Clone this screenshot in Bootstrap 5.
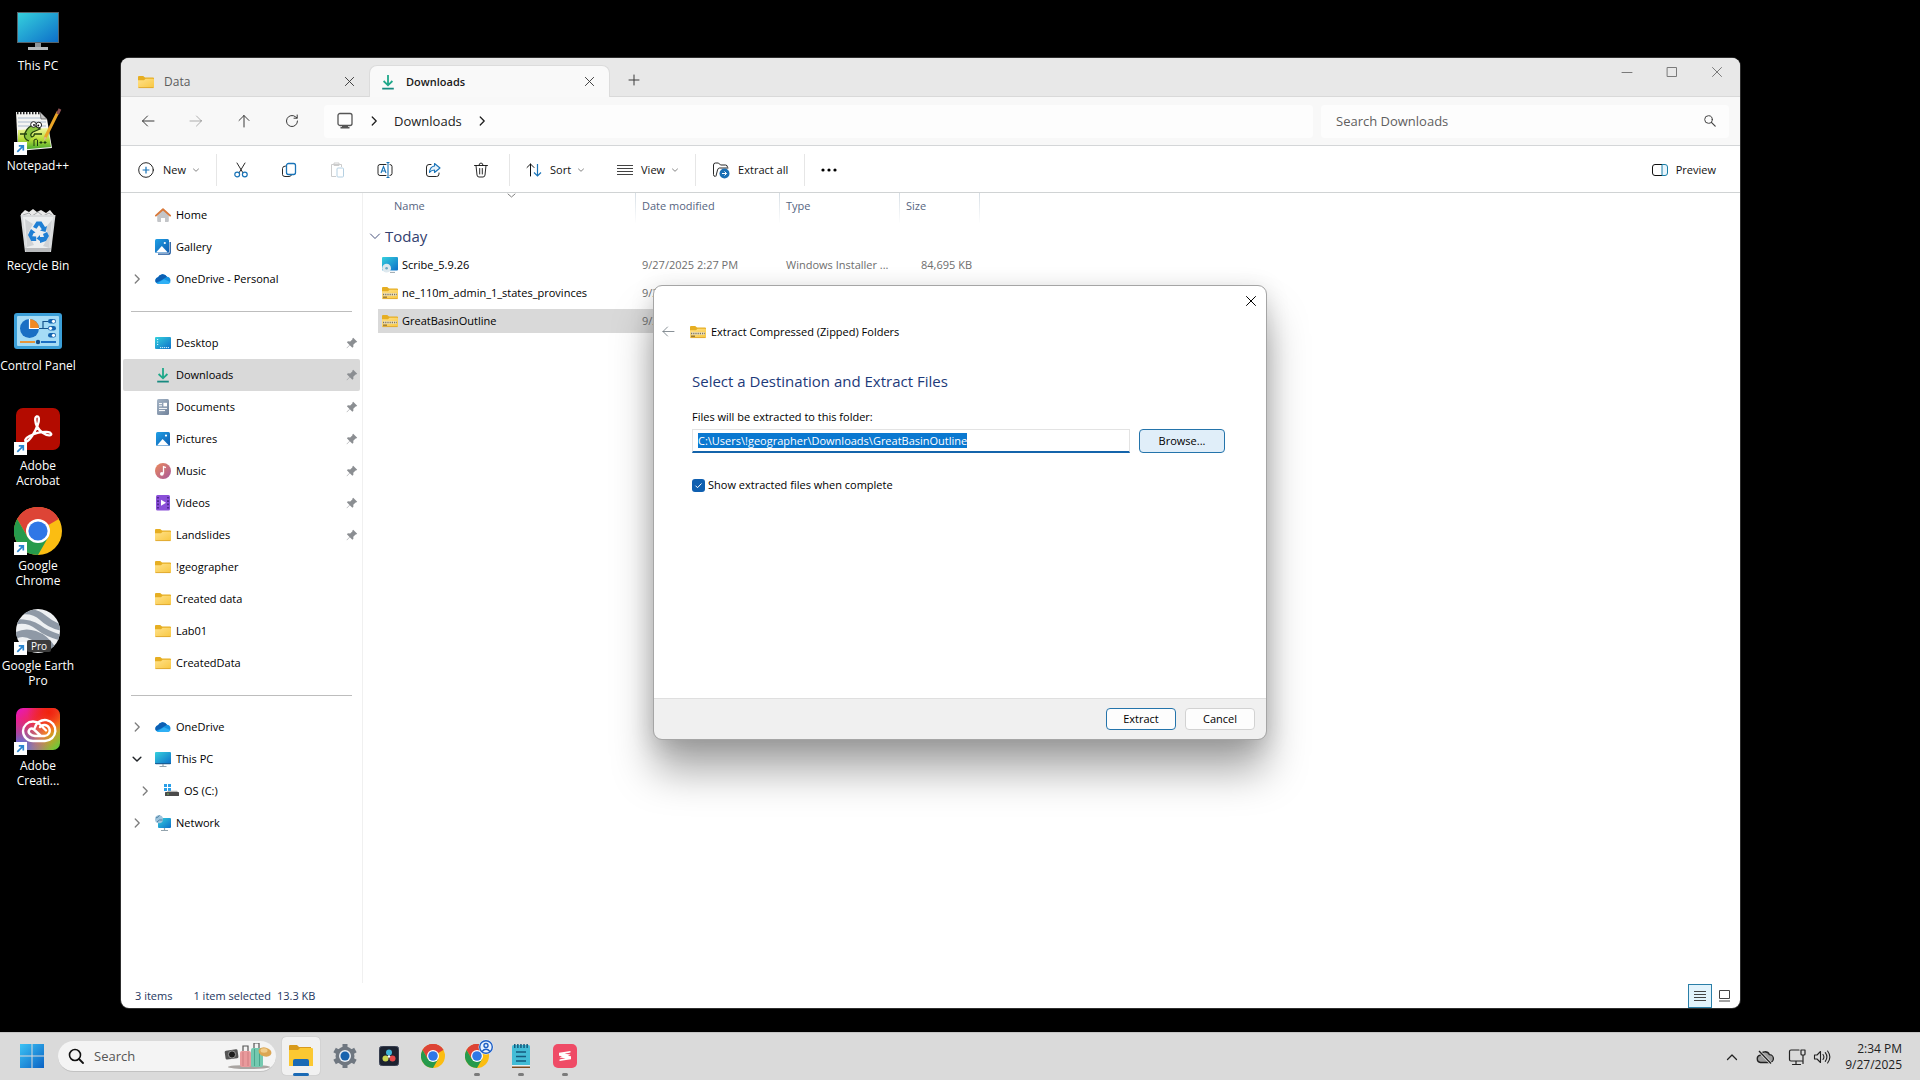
<!DOCTYPE html>
<html lang="en">
<head>
<meta charset="utf-8">
<meta name="viewport" content="width=device-width, initial-scale=1">
<title>Downloads</title>
<link href="https://cdn.jsdelivr.net/npm/bootstrap@5.3.0/dist/css/bootstrap.min.css" rel="stylesheet">
<style>
  :root { --ui: "Open Sans", "Noto Sans", sans-serif; }
  body { font-family: var(--ui); font-size: 11px; line-height: 16px; color: #111; background: #000; }
  a { color: inherit; text-decoration: none; }
  svg { display: block; flex: none; }
  button { font: inherit; color: inherit; background: none; border: 0; padding: 0; }
  .i16 { width: 16px; height: 16px; }
  .i18 { width: 18px; height: 18px; }
  .i48 { width: 48px; height: 48px; }
  .ln { fill: none; stroke: currentColor; stroke-linecap: round; stroke-linejoin: round; }

  /* desktop */
  .shortcut { width: 76px; height: 100px; padding-top: 7px; gap: 3px; color: #fff; font-size: 12px; line-height: 15px; }
  .shortcut span { width: 76px; white-space: nowrap; }

  /* explorer window */
  .explorer { left: 121px; right: 180px; top: 58px; bottom: 24px; border-radius: 8px; background: #fff; overflow: hidden; box-shadow: 0 0 0 1px #2e2e2e; }
  .tabstrip { height: 39px; background: #e8e8e8; border-bottom: 1px solid #d9d9d9; flex: none; }
  .tab-list { padding: 8px 0 0 7px; }
  .tab-item { width: 241px; height: 32px; margin-bottom: -1px; padding: 1px 14px 0 10px; gap: 10px; border-radius: 8px 8px 0 0; color: #5c5c5c; font-size: 12px; }
  .tab-item button { color: #333; }
  .tab-item.current { background: #f9f9f9; color: #1a1a1a; border: 1px solid #dcdcdc; border-bottom: 0; padding-top: 0; font-weight: 600; font-size: 11px; }
  .win-btns { padding: 1px 1px 0 0; }
  .win-btn { width: 45px; height: 26px; color: #7a7a7a; }
  .addressbar { height: 49px; background: #f8f8f8; border-bottom: 1px solid #d4d6d8; flex: none; padding: 0 11px 0 3px; font-size: 13px; }
  .nav-btn { width: 48px; height: 32px; color: #3a3a3a; }
  .crumbs, .searchbox { height: 33px; background: #fdfdfd; border-radius: 4px; }
  .crumbs { padding-left: 12px; margin: 0 8px; gap: 13px; color: #222; }
  .crumbs .host { color: #555; }
  .crumbs .sep { width: 14px; height: 14px; }
  .searchbox { width: 408px; padding: 0 11px 0 15px; color: #444; }
  .searchbox input { border: 0; outline: 0; background: none; flex: 1; min-width: 0; color: #5f5f5f; padding: 0; }
  .searchbox input::placeholder { color: #5f5f5f; opacity: 1; }
  .commands { height: 47px; padding-top: 2px; border-bottom: 1px solid #d0d3d4; background: #fff; flex: none; }
  .cmd { height: 32px; }
  .cmd-ico { width: 48px; height: 32px; }
  .cmd .more { width: 8px; height: 8px; margin-left: -2px; color: #777; }
  .rule { width: 1px; height: 32px; background: #e6e6e6; }

  .sidebar { width: 242px; padding: 6px 2px 0 2px; border-right: 1px solid #f0f0f0; flex: none; }
  .place { height: 32px; padding: 0 2px 0 7px; border-radius: 2px; color: #000; }
  .place.sel { background: #d9d9d9; }
  .place .tw { width: 14px; height: 14px; margin-right: 11px; color: #7d7d7d; }
  .place .nm { margin-left: 5px; flex: 1; }
  .place.deep { padding-left: 15px; }
  .split { height: 32px; padding: 0 8px 0 8px; }
  .split hr { margin: 0; flex: 1; border-top: 1px solid #bdbdbd; opacity: 1; }

  .files { table-layout: fixed; width: 602px; margin-left: 15px; border-collapse: separate; border-spacing: 0; }
  .files .c-name { width: 258px; }
  .files .c-date { width: 144px; }
  .files .c-type { width: 120px; }
  .files .c-size { width: 80px; }
  .files td, .files th { padding: 0 6px; white-space: nowrap; overflow: hidden; text-overflow: ellipsis; }
  .files thead th { height: 30px; padding-bottom: 4px; font-weight: 400; color: #56657f; border-right: 1px solid; border-image: linear-gradient(#d5dde4, #fff) 1; border-width: 0 1px 0 0; position: relative; }
  .files thead th:first-child { padding-left: 16px; }
  .sort-mark { left: 129px; top: 0; width: 9px; height: 5px; color: #808080; }
  .files .grp { height: 28px; padding: 0 0 3px; overflow: visible; font-weight: 400; font-size: 15px; color: #33406e; }
  .grp button { margin-left: -9px; gap: 4px; }
  .files tr.item td { height: 28px; border: solid transparent; border-width: 2px 0; background-clip: padding-box; color: #6e6e6e; }
  .files tr.item td:first-child { padding-left: 4px; color: #000; }
  .files tr.item td:last-child { padding-right: 8px; }
  .files tr.sel td { background-color: #d9d9d9; }
  .statusbar { height: 25px; color: #24365e; padding: 0 4px 0 14px; flex: none; }
  .statusbar .picked { margin-left: 21px; margin-right: 6px; }
  .view-btn { width: 24px; height: 24px; color: #444; }
  .view-btn.on { background: #e2f3fc; border: 1px solid #2a7fa8; }

  /* wizard */
  .wizard { left: 654px; top: 286px; width: 612px; height: 453px; background: #fff; border-radius: 8px; outline: 1px solid #a5a5a5; box-shadow: 0 32px 42px rgba(0,0,0,.34), 0 4px 24px rgba(0,0,0,.16); color: #000; overflow: hidden; }
  .wizard .caption-row { height: 30px; padding-right: 9px; }
  .wizard .title-row { height: 30px; padding: 2px 0 0 6px; }
  .wizard .title-row .zip-ico { margin: 0 5px 0 14px; }
  .wizard .pane { padding: 25px 41px 0 38px; }
  .wizard h1 { font-size: 15px; line-height: 20px; font-weight: 400; color: #1d3a7a; margin: 0 0 18px; }
  .path-row { gap: 9px; margin-bottom: 24px; }
  .path-box { height: 24px; flex: 1; border: 1px solid #e3e3e3; border-bottom: 2px solid #1464ab; padding: 0 5px; outline: 0; color: #111; min-width: 0; }
  .path-box::selection { background: #0a78d0; color: #fff; }
  .wbtn { height: 22px; width: 70px; border: 1px solid #d2d2d2; border-radius: 4px; background: #fdfdfd; }
  .wbtn.def { border-color: #2474ab; }
  .wbtn.hot { width: 86px; height: 24px; border-color: #2474ab; background: #e0eef9; }
  .tick { appearance: none; width: 13px; height: 13px; margin: 0; border-radius: 3px; background: #0f5fb0 url("data:image/svg+xml,%3Csvg xmlns='http://www.w3.org/2000/svg' viewBox='0 0 13 13'%3E%3Cpath d='M3.5 6.7l2 2 4-4.2' fill='none' stroke='%23fff'/%3E%3C/svg%3E"); }
  .tick-row { gap: 3px; }
  .wizard footer { height: 41px; background: #f0f0f0; border-top: 1px solid #dfdfdf; padding: 0 11px; gap: 9px; }

  /* taskbar */
  .taskbar { height: 48px; background: #dadada; border-top: 1px solid #c4c4c4; flex: none; padding-left: 10px; padding-right: 18px; }
  .tb { width: 44px; height: 47px; padding-bottom: 1px; }
  .tb.on .tile { background: #f1f1f1; box-shadow: 0 0 1px #999; }
  .tile { width: 38px; height: 38px; border-radius: 4px; }
  .run { bottom: 4px; width: 6px; height: 3px; border-radius: 2px; background: #7b7b7b; }
  .tb.on .run { width: 16px; background: #1a6ab5; }
  .seek { width: 218px; height: 31px; margin: 0 3px 0 4px; border-radius: 16px; background: #f4f4f4; border-bottom: 1px solid #c2c2c2; padding: 0 4px 0 10px; font-size: 13px; }
  .seek input { border: 0; outline: 0; background: none; flex: 1; min-width: 0; padding: 0 0 0 10px; }
  .seek input::placeholder { color: #555; opacity: 1; }
  .tray { color: #222; font-size: 12px; gap: 14px; }
  .tray .pair { gap: 7px; }
</style>
<script src="https://cdn.jsdelivr.net/npm/bootstrap@5.3.0/dist/js/bootstrap.bundle.min.js"></script>
</head>
<body class="vh-100 overflow-hidden d-flex flex-column">

<svg width="0" height="0" class="position-absolute" aria-hidden="true">
  <defs>
    <linearGradient id="gPc" x1="0" y1="0" x2="1" y2="1"><stop offset="0" stop-color="#35d0dd"/><stop offset="1" stop-color="#0d6fc9"/></linearGradient>
    <linearGradient id="gFo" x1="0" y1="0" x2="1" y2="1"><stop offset="0" stop-color="#ffe18a"/><stop offset="1" stop-color="#f8c741"/></linearGradient>
    <linearGradient id="gBl" x1="0" y1="0" x2="1" y2="1"><stop offset="0" stop-color="#1fa0e6"/><stop offset="1" stop-color="#0f5cb0"/></linearGradient>
    <linearGradient id="gMu" x1="0" y1="0" x2="1" y2="1"><stop offset="0" stop-color="#ec8a5b"/><stop offset="1" stop-color="#a8589c"/></linearGradient>
    <linearGradient id="gDo" x1="0" y1="0" x2="1" y2="1"><stop offset="0" stop-color="#a4b4c6"/><stop offset="1" stop-color="#71839b"/></linearGradient>
    <linearGradient id="gNp" x1="0" y1="0" x2="0" y2="1"><stop offset="0" stop-color="#f3f8a0"/><stop offset=".5" stop-color="#b9dd3a"/><stop offset="1" stop-color="#3fa52c"/></linearGradient>
    <linearGradient id="gCc1" x1="0" y1="0" x2="1" y2="1"><stop offset="0" stop-color="#e516c8"/><stop offset=".35" stop-color="#f02a4c"/><stop offset=".65" stop-color="#f58a1e"/><stop offset="1" stop-color="#52d540"/></linearGradient>
    <radialGradient id="gCc2" cx=".1" cy=".95" r=".7"><stop offset="0" stop-color="#3a7bf5"/><stop offset="1" stop-color="#8a50e8" stop-opacity="0"/></radialGradient>
    <radialGradient id="gCc3" cx=".75" cy=".1" r=".5"><stop offset="0" stop-color="#f0220c"/><stop offset="1" stop-color="#f0220c" stop-opacity="0"/></radialGradient>
    <linearGradient id="gStart" x1="0" y1="0" x2="1" y2="1"><stop offset="0" stop-color="#3cc3f5"/><stop offset="1" stop-color="#0a62c4"/></linearGradient>
    <clipPath id="cEarth"><circle cx="24" cy="24" r="22"/></clipPath>

    <symbol id="folder" viewBox="0 0 16 16"><path d="M0 3a1 1 0 0 1 1-1h4.2l1.8 1.6H15a1 1 0 0 1 1 1V7H0z" fill="#e6ae22"/><path d="M0 6.2h6L7.6 4.8H15a1 1 0 0 1 1 1V13a1 1 0 0 1-1 1H1a1 1 0 0 1-1-1z" fill="url(#gFo)"/><path d="M.5 13.6h15" stroke="#d9a02a" stroke-width=".8"/></symbol>
    <symbol id="zip" viewBox="0 0 16 16"><use href="#folder"/><path d="M1 9.500h14" stroke="#efe3c0" stroke-width="2.600"/><path d="M1 9.500h14" stroke="#7a7260" stroke-width="1.400" stroke-dasharray="1.200 1"/><path d="M1 12.200h4" stroke="#9a7a3a" stroke-width="1.400"/></symbol>
    <symbol id="dl" viewBox="0 0 16 16"><path d="M8 1v10M3.600 7L8 11.300 12.400 7" fill="none" stroke="#1fa88a" stroke-width="1.800"/><path d="M2.200 14.600h11.600" stroke="#178a80" stroke-width="1.800"/></symbol>
    <symbol id="home" viewBox="0 0 16 16"><path d="M2.200 7.500L8 2.600l5.800 4.900V14a1 1 0 0 1-1 1H10v-4H6v4H3.200a1 1 0 0 1-1-1z" fill="#c3c5c8"/><path d="M.9 8.600L8 2.200l7.100 6.400" fill="none" stroke="#d9793a" stroke-width="1.900" stroke-linecap="round" stroke-linejoin="round"/></symbol>
    <symbol id="gallery" viewBox="0 0 16 16"><path d="M15.200 3v10.200a2 2 0 0 1-2 2H3" fill="none" stroke="#17539a" stroke-width="1.300"/><rect x="0" y="0" width="14" height="14" rx="1.500" fill="url(#gBl)"/><path d="M1 13.600L6.800 7l6 6.600z" fill="#fff"/><circle cx="9.800" cy="4" r="1.100" fill="#fff"/></symbol>
    <symbol id="cloud" viewBox="0 0 16 16"><path d="M3.400 13A3.400 3.400 0 0 1 3 6.300 5 5 0 0 1 12 5.700 3.700 3.700 0 0 1 12.600 13z" fill="#1490df"/><path d="M3 6.300A5 5 0 0 1 12 5.700L5.500 9.800 1 11.600A3.400 3.400 0 0 1 3 6.300z" fill="#0d5fb3"/><path d="M2 12.600l7-4.300 6.600 3A3.400 3.400 0 0 1 12.600 13H3.400z" fill="#2fb0f5"/></symbol>
    <symbol id="desk" viewBox="0 0 16 16"><rect y="2" width="16" height="12" rx="1" fill="url(#gPc)"/><path d="M2 4.500h1.200M2 7h1.200M2 9.500h1.200M5 12.600h9" stroke="#d9f6ff" stroke-width="1" stroke-dasharray="1.200 .8"/></symbol>
    <symbol id="docs" viewBox="0 0 16 16"><rect x="2" y="0" width="12" height="16" rx="1.500" fill="url(#gDo)"/><path d="M4 4.600h3M4 6.800h3M4 9.400h8M4 11.600h6" stroke="#fff"/><path d="M8.400 3.800H12v3.600H8.400z" fill="#fff"/></symbol>
    <symbol id="pics" viewBox="0 0 16 16"><rect x="1" y="1" width="14" height="14" rx="1.500" fill="url(#gBl)"/><path d="M2 14.600L7.600 8l6.400 6.600z" fill="#fff"/><circle cx="11" cy="4.600" r="1.100" fill="#fff"/></symbol>
    <symbol id="music" viewBox="0 0 16 16"><circle cx="8" cy="8" r="8" fill="url(#gMu)"/><path d="M8.500 10.400V3.600l2.400 1" fill="none" stroke="#fff" stroke-width="1.300"/><circle cx="6.900" cy="10.800" r="1.900" fill="#fff"/></symbol>
    <symbol id="video" viewBox="0 0 16 16"><rect x="1" y="0" width="14" height="15.600" rx="1.500" fill="#8a4fd8"/><path d="M3 2v12M13 2v12" stroke="#42207e" stroke-width="1.600" stroke-dasharray="1.600 1.700"/><path d="M6 4.800l5 3-5 3z" fill="#fff"/></symbol>
    <symbol id="pc" viewBox="0 0 16 16"><rect x="0" y="1" width="16" height="12" rx="1" fill="url(#gPc)"/><path d="M0 12h16v.5a1 1 0 0 1-1 .8H1a1 1 0 0 1-1-.8z" fill="#1a5f96"/><path d="M8 13v2M4.500 15.500h7" stroke="#93a3ad" stroke-width="1.200"/></symbol>
    <symbol id="os" viewBox="0 0 16 16"><path d="M1 1h3v3H1zM5 1h3v3H5zM1 5h3v3H1zM5 5h3v3H5z" fill="#2a9fe8"/><rect x="2" y="9" width="14" height="4" rx=".6" fill="#4a4a4a"/><path d="M4 9l1-1.200h9L15 9z" fill="#b5b5b5"/><circle cx="5" cy="11" r=".7" fill="#7fdc5a"/></symbol>
    <symbol id="net" viewBox="0 0 16 16"><rect x="3" y="3" width="13" height="10" rx="1" fill="url(#gPc)"/><path d="M9.500 13v2M6 15.500h7" stroke="#93a3ad" stroke-width="1.200"/><circle cx="4" cy="4.200" r="4" fill="#9ec4dd"/><path d="M1 3q3-1 3.400-2.800M2 7q2-3 5.600-2" fill="none" stroke="#4d7f9f"/></symbol>
    <symbol id="msi" viewBox="0 0 16 16"><rect x="0" y="0" width="16" height="13.500" rx="1" fill="url(#gPc)"/><path d="M8 15.400h5" stroke="#9aa7b0"/><circle cx="4.600" cy="11.200" r="4.400" fill="#dde8ee"/><circle cx="4.600" cy="11.200" r="1.300" fill="#6aa9c4"/></symbol>
    <symbol id="pin" viewBox="0 0 12 12"><path d="M7.200.8l4 4-1.100.7-.5-.1-2.300 2.300.1 2.100-1 1L3.800 8.200.9 11.200l-.3-.3L3.500 7.900.9 5.300l1-1 2.300.2 2.300-2.300-.1-.6z" fill="#8b8e92"/></symbol>
    <symbol id="right" viewBox="0 0 16 16"><path class="ln" d="M6 3.500l4.500 4.500L6 12.500" stroke-width="1.500"/></symbol>
    <symbol id="down" viewBox="0 0 16 16"><path class="ln" d="M3.600 6L8 10.200 12.400 6" stroke-width="1.700"/></symbol>
    <symbol id="dn" viewBox="0 0 8 8"><path class="ln" d="M1.500 3L4 5.300 6.500 3" stroke-width=".9"/></symbol>
    <symbol id="x" viewBox="0 0 12 12"><path class="ln" d="M1.500 1.500l9 9M10.500 1.500l-9 9" stroke-width="1"/></symbol>
    <symbol id="lens" viewBox="0 0 16 16"><circle class="ln" cx="6.500" cy="6.500" r="3.800" stroke-width="1"/><path class="ln" d="M9.400 9.400L13.200 13.200" stroke-width="1.200"/></symbol>
    <symbol id="link" viewBox="0 0 13 13"><rect width="13" height="13" fill="#fff"/><path d="M3.300 9.800L8.500 4.600M4.800 3.900h4.500v4.500" fill="none" stroke="#2b86d0" stroke-width="1.700"/></symbol>
    <symbol id="chrome" viewBox="0 0 48 48"><circle cx="24" cy="24" r="24" fill="#fbbd12"/><path d="M24 24L3.200 12A24 24 0 0 1 44.800 12z" fill="#dd4436"/><path d="M24 12h20.800A24 24 0 0 0 3.200 12L13.600 30z" fill="#dd4436"/><path d="M3.200 12A24 24 0 0 0 24 48L34.400 30 24 24 13.600 30z" fill="#269a4c"/><circle cx="24" cy="24" r="12" fill="#fff"/><circle cx="24" cy="24" r="9.600" fill="#2f77e6"/></symbol>
  </defs>
</svg>

<main class="flex-grow-1 position-relative">
  <nav class="d-flex flex-column align-items-start" aria-label="Desktop">
    <a href="#" class="shortcut d-flex flex-column align-items-center text-center">
      <svg class="i48" viewBox="0 0 48 48"><rect x="3" y="5" width="42" height="31" fill="#56646c"/><rect x="4" y="6" width="40" height="29" fill="url(#gPc)"/><path d="M21 36h6v4h-6z" fill="#8c9499"/><path d="M14 40h20v3H14z" fill="#b4babd"/></svg>
      <span>This PC</span></a>
    <a href="#" class="shortcut d-flex flex-column align-items-center text-center">
      <svg class="i48" viewBox="0 0 48 48"><path d="M2 5h24l7 7 5 29-34 3z" fill="#f5f5f2"/><path d="M4 11h24M4 15h28M4 19h28" stroke="#a9b9cc"/><path d="M3 6h24" stroke="#222" stroke-width="2.400" stroke-dasharray="1.500 1.500"/><path d="M26 5l7 7h-6z" fill="#c4c4c4" stroke="#444" stroke-width=".6"/><path d="M4 23l30-2 3 19-33 3z" fill="url(#gNp)"/><path d="M15 34q-6-2-4-8 3-7 9-8l6 4-7 3q-4 3-1 5 3-1 2-3" fill="#8cc63f" stroke="#23420e" stroke-width="1.300"/><path d="M6 27h7M20 27h8" stroke="#23420e" stroke-width="1.300"/><circle cx="19.500" cy="17.500" r="2.800" fill="#fff" stroke="#222"/><circle cx="24.800" cy="18" r="2.800" fill="#fff" stroke="#222"/><circle cx="20" cy="18" r=".9"/><circle cx="24.300" cy="18.500" r=".9"/><path d="M20 39v-6q2.500-2 3.500 0v6M25.500 35.500h3M27 34v3M29.500 35.500h3M31 34v3" fill="none" stroke="#1c3a10" stroke-width="1"/><path d="M31 31L44 5" stroke="#eaa526" stroke-width="3"/><path d="M43.500 7L46 2" stroke="#8c5050" stroke-width="3"/><path d="M29.500 34l1-4.500 2.600 1.400z" fill="#d8b98a"/><use href="#link" x="0" y="35" width="13" height="13"/></svg>
      <span>Notepad++</span></a>
    <a href="#" class="shortcut d-flex flex-column align-items-center text-center">
      <svg class="i48" viewBox="0 0 48 48"><path d="M7 7l4-4 4 2 4-3 4 3 4-2 5 3 4-3 4 5v3H7z" fill="#e9e9e9"/><path d="M9 8l6-2 3 3 6-4 5 4 6-3 4 3" stroke="#a5a8aa" fill="none"/><path d="M6.500 8h35l-4.500 37H11z" fill="#d9dbdd"/><path d="M9 10h30l-4 31H13z" fill="#eceeef"/><path d="M11 12l8 5-5 9 6 12-7 2zM38 13l-7 8 4 8-6 10 6 2z" fill="#cfd2d5"/><path d="M11 41h26l-1 4H12z" fill="#b9bbbd"/><path d="M19 20l3.500-5.500h5L31 20l2-1-1.500 6-5.500-1.500 1.800-1.200-2.800-4-2.500 3.500zM17 22l4.500 3.500-2 .8-1.300 3 4 .2v4.500h-5L14 28l1.600-3.500zM26 36v-2l-3.500-2.500L26 28v2h4l-1-3 4-2 2 4-3 5z" fill="#1f7fd4"/></svg>
      <span>Recycle Bin</span></a>
    <a href="#" class="shortcut d-flex flex-column align-items-center text-center">
      <svg class="i48" viewBox="0 0 48 48"><rect y="6" width="48" height="36" rx="3" fill="#3b9fd8"/><rect x="3" y="9" width="42" height="30" rx="1" fill="#a5dcf6"/><circle cx="15.500" cy="21.500" r="9.500" fill="#1b6fc4"/><path d="M15.500 21.500V12a9.500 9.500 0 0 1 9.500 9.500z" fill="#f08a24"/><path d="M15.500 12v9.500H25" fill="none" stroke="#fff" stroke-width="1.200"/><path d="M25 21.500h4v-7h5M29 21.500h5" stroke="#17558e" fill="none" stroke-width="1.200"/><rect x="34" y="12" width="8" height="4.600" rx="2.300" fill="#1464b0"/><rect x="34" y="19" width="8" height="4.600" rx="2.300" fill="#1464b0"/><rect x="34" y="26" width="8" height="4.600" rx="2.300" fill="#1464b0"/><circle cx="39.500" cy="14.300" r="1.600" fill="#fff"/><circle cx="36.500" cy="21.300" r="1.600" fill="#fff"/><circle cx="39.500" cy="28.300" r="1.600" fill="#fff"/><path d="M6 35h15" stroke="#e6953a" stroke-width="2"/><path d="M27 35h15" stroke="#1b6fc4" stroke-width="2"/><circle cx="24" cy="35" r="2.200" fill="#14508c"/></svg>
      <span>Control Panel</span></a>
    <a href="#" class="shortcut d-flex flex-column align-items-center text-center">
      <svg class="i48" viewBox="0 0 48 48"><rect x="2" y="1" width="44" height="42" rx="7" fill="#b30b00"/><path d="M22.500 9.500c3-1 3 4 1 9-3 8-8 15-11 16-2 0-2-3 3-5.500 6-3 13-4.500 18-4 4 .3 5 3 2 3.400-4 .3-10-4-12.500-9-2-4-2.500-9-.5-9.900z" fill="none" stroke="#fff" stroke-width="2.400"/><use href="#link" x="0" y="35" width="13" height="13"/></svg>
      <span>Adobe<br>Acrobat</span></a>
    <a href="#" class="shortcut d-flex flex-column align-items-center text-center">
      <svg class="i48" viewBox="0 0 48 48"><use href="#chrome"/><use href="#link" x="0" y="35" width="13" height="13"/></svg>
      <span>Google<br>Chrome</span></a>
    <a href="#" class="shortcut d-flex flex-column align-items-center text-center">
      <svg class="i48" viewBox="0 0 48 48"><g clip-path="url(#cEarth)"><rect width="48" height="48" fill="#eef0f2"/><path d="M4 8q14-3 22 5t22 11v-6Q38 14 31 8T10 1zM0 18q12-4 22 4t26 12v-6q-14-4-22-10T2 12zM0 33q8-6 18 0t18 12l6-4Q34 28 22 24T0 26z" fill="#8f99a6"/></g><rect x="13" y="33" width="24" height="12" rx="2" fill="#3c3c3c"/><text x="25" y="43" text-anchor="middle" fill="#fff" font-size="10">Pro</text><use href="#link" x="0" y="35" width="13" height="13"/></svg>
      <span>Google Earth<br>Pro</span></a>
    <a href="#" class="shortcut d-flex flex-column align-items-center text-center">
      <svg class="i48" viewBox="0 0 48 48"><rect x="2" y="1" width="44" height="42" rx="7" fill="url(#gCc1)"/><rect x="2" y="1" width="44" height="42" rx="7" fill="url(#gCc3)"/><rect x="2" y="1" width="44" height="42" rx="7" fill="url(#gCc2)"/><path d="M19 34a10 10 0 0 1-10-10 10 10 0 0 1 10-9.500q4 0 6.500 2.500l6.500 6.500M19 34h12a10.500 10.500 0 1 0-10.300-13M27 29l-7-6.500q-3-2-4.500 0-2 2.500.5 4.500 2 1.800 5 2h9a5.500 5.500 0 1 0-4-9" fill="none" stroke="#fff" stroke-width="2.400" stroke-linecap="round"/><use href="#link" x="0" y="35" width="13" height="13"/></svg>
      <span>Adobe<br>Creati...</span></a>
  </nav>

  <section class="explorer position-absolute d-flex flex-column">
    <div class="tabstrip d-flex">
      <div class="tab-list d-flex align-items-end">
        <div class="tab-item d-flex align-items-center"><svg class="i16"><use href="#folder"/></svg><span class="flex-grow-1">Data</span><button aria-label="Close Data"><svg width="11" height="11"><use href="#x"/></svg></button></div>
        <div class="tab-item current d-flex align-items-center"><svg class="i16"><use href="#dl"/></svg><span class="flex-grow-1">Downloads</span><button aria-label="Close Downloads"><svg width="11" height="11"><use href="#x"/></svg></button></div>
        <button class="nav-btn d-flex align-items-center justify-content-center" aria-label="New tab"><svg width="12" height="12" viewBox="0 0 12 12"><path class="ln" d="M6 1v10M1 6h10"/></svg></button>
      </div>
      <div class="win-btns ms-auto d-flex">
        <button class="win-btn d-flex align-items-center justify-content-center" aria-label="Minimize"><svg width="12" height="12" viewBox="0 0 12 12"><path class="ln" d="M1 6.500h10"/></svg></button>
        <button class="win-btn d-flex align-items-center justify-content-center" aria-label="Maximize"><svg width="12" height="12" viewBox="0 0 12 12"><path class="ln" d="M1.500 1.500h9v9h-9z"/></svg></button>
        <button class="win-btn d-flex align-items-center justify-content-center" aria-label="Close"><svg width="12" height="12"><use href="#x"/></svg></button>
      </div>
    </div>

    <div class="addressbar d-flex align-items-center">
      <div class="d-flex">
        <button class="nav-btn d-flex align-items-center justify-content-center" aria-label="Back"><svg class="i16" viewBox="0 0 16 16"><path class="ln" d="M14 8H2.500M7.500 3l-5 5 5 5"/></svg></button>
        <button class="nav-btn d-flex align-items-center justify-content-center text-black-50" aria-label="Forward"><svg class="i16" viewBox="0 0 16 16"><path class="ln" d="M2 8h11.500M8.500 3l5 5-5 5" opacity=".6"/></svg></button>
        <button class="nav-btn d-flex align-items-center justify-content-center" aria-label="Up"><svg class="i16" viewBox="0 0 16 16"><path class="ln" d="M8 14V2.500M3 7.500l5-5 5 5"/></svg></button>
        <button class="nav-btn d-flex align-items-center justify-content-center" aria-label="Refresh"><svg class="i16" viewBox="0 0 16 16"><path class="ln" d="M13.500 8A5.500 5.500 0 1 1 11.500 3.800L13 5M13.200 2v3.200H10"/></svg></button>
      </div>
      <div class="crumbs d-flex align-items-center flex-grow-1">
        <svg class="i18 host" viewBox="0 0 18 18"><rect class="ln" x="2" y="1.500" width="14" height="12" rx="2" stroke-width="1.300"/><path d="M6 14h6v1h1.500v1.500h-9V15H6z" fill="#555"/></svg>
        <svg class="sep"><use href="#right"/></svg>
        <a href="#">Downloads</a>
        <svg class="sep"><use href="#right"/></svg>
      </div>
      <label class="searchbox d-flex align-items-center"><input type="text" placeholder="Search Downloads" aria-label="Search Downloads"><svg class="i16"><use href="#lens"/></svg></label>
    </div>

    <div class="commands d-flex align-items-center">
      <button class="cmd d-flex align-items-center px-3 gap-2"><svg class="i18" viewBox="0 0 16 16"><circle class="ln" cx="8" cy="8" r="6.500" stroke-width=".8"/><path d="M8 5v6M5 8h6" stroke="#1a74b8" stroke-width="1.100"/></svg>New<svg class="more"><use href="#dn"/></svg></button>
      <div class="rule"></div>
      <div class="d-flex">
        <button class="cmd-ico d-flex align-items-center justify-content-center" aria-label="Cut"><svg class="i16" viewBox="0 0 16 16"><path class="ln" d="M4 1l5.800 9.600M12 1L6.200 10.600" stroke-width=".9"/><g fill="none" stroke="#1a74b8" stroke-width="1.200"><circle cx="4.200" cy="12.500" r="2.400"/><circle cx="11.800" cy="12.500" r="2.400"/></g></svg></button>
        <button class="cmd-ico d-flex align-items-center justify-content-center" aria-label="Copy"><svg class="i16" viewBox="0 0 16 16"><path class="ln" d="M4.500 4Q1.500 4 1.500 6.500v6q0 2 2.500 2h4q2 0 2.500-1.500" stroke-width=".9"/><rect x="5.500" y="1.500" width="9" height="11" rx="2" fill="#fff" stroke="#1a74b8" stroke-width="1.300"/></svg></button>
        <button class="cmd-ico d-flex align-items-center justify-content-center" aria-label="Paste" disabled><svg class="i16" viewBox="0 0 16 16"><path d="M7 14.500H2.500v-12h10V5M5 1h5v2.500H5z" fill="none" stroke="#ccc"/><rect x="8" y="6" width="6.500" height="9" rx="1" fill="#fff" stroke="#b5d0e2"/></svg></button>
        <button class="cmd-ico d-flex align-items-center justify-content-center" aria-label="Rename"><svg class="i18" viewBox="0 0 18 18"><path class="ln" d="M10 3.500H4Q2 3.500 2 5.500v7q0 2 2 2h6M14 3.500q2 0 2 2v7q0 2-2 2" stroke-width=".9"/><path d="M5 12l2.500-6.500L10 12M6 10h3M12 1.500v15M10.500 1.500h3M10.500 16.500h3" fill="none" stroke="#1a74b8" stroke-width="1.100"/></svg></button>
        <button class="cmd-ico d-flex align-items-center justify-content-center" aria-label="Share"><svg class="i16" viewBox="0 0 16 16"><path class="ln" d="M6 2.500H4q-2.500 0-2.500 2.500v7q0 2.500 2.500 2.500h7.500q2.500 0 2.500-2.500v-1" stroke-width=".9"/><path d="M9.500 1.500l5.500 4.500-5.500 4.500V8Q6.500 8 4.500 10.500 5 4.500 9.500 4z" fill="#e6f2fb" stroke="#1a74b8" stroke-width="1.100" stroke-linejoin="round"/></svg></button>
        <button class="cmd-ico d-flex align-items-center justify-content-center" aria-label="Delete"><svg class="i16" viewBox="0 0 16 16"><path class="ln" d="M1.500 3.500h13M6 3.500q0-2.500 2-2.500t2 2.500M3 3.500l1 9.500q.2 2 2 2h4q1.800 0 2-2l1-9.500M6.700 6.500V12M9.300 6.500V12" stroke-width=".9"/></svg></button>
      </div>
      <div class="rule ms-1"></div>
      <button class="cmd d-flex align-items-center ps-3 pe-3 gap-2"><svg class="i16" viewBox="0 0 16 16"><path class="ln" d="M4.500 14V2M1 5.500L4.500 2 8 5.500"/><path d="M11.500 2v12M8 10.500l3.500 3.500 3.500-3.500" fill="none" stroke="#1a74b8" stroke-width="1.200"/></svg>Sort<svg class="more"><use href="#dn"/></svg></button>
      <button class="cmd d-flex align-items-center ps-3 pe-3 gap-2"><svg class="i16" viewBox="0 0 16 16"><path d="M0 3.500h16M0 6.500h16M0 9.500h16M0 12.500h16" stroke="#444"/></svg>View<svg class="more"><use href="#dn"/></svg></button>
      <div class="rule"></div>
      <button class="cmd d-flex align-items-center px-3 gap-2"><svg class="i18" viewBox="0 0 18 18"><path class="ln" d="M3 15.500q-1.500 0-1.500-2V4q0-2 2-2h3l2 2h5q2 0 2 2M4 15l1.500-6q.5-2 2-2H16" stroke-width=".9"/><circle cx="12.500" cy="12.500" r="5" fill="#1a6fb5"/><path d="M10 12.500h4.500M12.500 10.500l2 2-2 2" fill="none" stroke="#fff"/></svg>Extract all</button>
      <div class="rule"></div>
      <button class="cmd-ico d-flex align-items-center justify-content-center" aria-label="More"><svg width="16" height="4" viewBox="0 0 16 4"><circle cx="2" cy="2" r="1.600"/><circle cx="8" cy="2" r="1.600"/><circle cx="14" cy="2" r="1.600"/></svg></button>
      <button class="cmd d-flex align-items-center gap-2 ms-auto me-4"><svg class="i16" viewBox="0 0 16 16"><path class="ln" d="M10 2.500H3Q.5 2.500.5 5v6q0 2.500 2.500 2.500h7"/><path d="M10 2.500h3q2.500 0 2.500 2.500v6q0 2.500-2.500 2.500h-3z" fill="#e8f5fc" stroke="#1a7fa8"/></svg>Preview</button>
    </div>

    <div class="d-flex flex-grow-1 overflow-hidden">
      <nav class="sidebar" aria-label="Places">
        <a href="#" class="place d-flex align-items-center"><span class="tw"></span><svg class="i16"><use href="#home"/></svg><span class="nm">Home</span></a>
        <a href="#" class="place d-flex align-items-center"><span class="tw"></span><svg class="i16"><use href="#gallery"/></svg><span class="nm">Gallery</span></a>
        <a href="#" class="place d-flex align-items-center"><svg class="tw"><use href="#right"/></svg><svg class="i16"><use href="#cloud"/></svg><span class="nm">OneDrive - Personal</span></a>
        <div class="split d-flex align-items-center"><hr></div>
        <a href="#" class="place d-flex align-items-center"><span class="tw"></span><svg class="i16"><use href="#desk"/></svg><span class="nm">Desktop</span><svg width="12" height="12"><use href="#pin"/></svg></a>
        <a href="#" class="place sel d-flex align-items-center"><span class="tw"></span><svg class="i16"><use href="#dl"/></svg><span class="nm">Downloads</span><svg width="12" height="12"><use href="#pin"/></svg></a>
        <a href="#" class="place d-flex align-items-center"><span class="tw"></span><svg class="i16"><use href="#docs"/></svg><span class="nm">Documents</span><svg width="12" height="12"><use href="#pin"/></svg></a>
        <a href="#" class="place d-flex align-items-center"><span class="tw"></span><svg class="i16"><use href="#pics"/></svg><span class="nm">Pictures</span><svg width="12" height="12"><use href="#pin"/></svg></a>
        <a href="#" class="place d-flex align-items-center"><span class="tw"></span><svg class="i16"><use href="#music"/></svg><span class="nm">Music</span><svg width="12" height="12"><use href="#pin"/></svg></a>
        <a href="#" class="place d-flex align-items-center"><span class="tw"></span><svg class="i16"><use href="#video"/></svg><span class="nm">Videos</span><svg width="12" height="12"><use href="#pin"/></svg></a>
        <a href="#" class="place d-flex align-items-center"><span class="tw"></span><svg class="i16"><use href="#folder"/></svg><span class="nm">Landslides</span><svg width="12" height="12"><use href="#pin"/></svg></a>
        <a href="#" class="place d-flex align-items-center"><span class="tw"></span><svg class="i16"><use href="#folder"/></svg><span class="nm">!geographer</span></a>
        <a href="#" class="place d-flex align-items-center"><span class="tw"></span><svg class="i16"><use href="#folder"/></svg><span class="nm">Created data</span></a>
        <a href="#" class="place d-flex align-items-center"><span class="tw"></span><svg class="i16"><use href="#folder"/></svg><span class="nm">Lab01</span></a>
        <a href="#" class="place d-flex align-items-center"><span class="tw"></span><svg class="i16"><use href="#folder"/></svg><span class="nm">CreatedData</span></a>
        <div class="split d-flex align-items-center"><hr></div>
        <a href="#" class="place d-flex align-items-center"><svg class="tw"><use href="#right"/></svg><svg class="i16"><use href="#cloud"/></svg><span class="nm">OneDrive</span></a>
        <a href="#" class="place d-flex align-items-center"><svg class="tw text-dark"><use href="#down"/></svg><svg class="i16"><use href="#pc"/></svg><span class="nm">This PC</span></a>
        <a href="#" class="place deep d-flex align-items-center"><svg class="tw"><use href="#right"/></svg><svg class="i16"><use href="#os"/></svg><span class="nm">OS (C:)</span></a>
        <a href="#" class="place d-flex align-items-center"><svg class="tw"><use href="#right"/></svg><svg class="i16"><use href="#net"/></svg><span class="nm">Network</span></a>
      </nav>

      <div class="flex-grow-1">
        <table class="files">
          <colgroup><col class="c-name"><col class="c-date"><col class="c-type"><col class="c-size"></colgroup>
          <thead><tr><th>Name<svg class="sort-mark position-absolute" viewBox="0 0 9 5"><path class="ln" d="M1 1l3.500 3L8 1"/></svg></th><th>Date modified</th><th>Type</th><th>Size</th></tr></thead>
          <tbody>
            <tr><th colspan="4" class="grp"><button class="d-flex align-items-center"><svg width="12" height="12" viewBox="0 0 12 12"><path class="ln" d="M1.500 4L6 8.500 10.500 4" stroke-width=".9"/></svg>Today</button></th></tr>
            <tr class="item"><td><span class="d-flex align-items-center gap-1"><svg class="i16"><use href="#msi"/></svg>Scribe_5.9.26</span></td><td>9/27/2025 2:27 PM</td><td>Windows Installer ...</td><td class="text-end">84,695 KB</td></tr>
            <tr class="item"><td><span class="d-flex align-items-center gap-1"><svg class="i16"><use href="#zip"/></svg>ne_110m_admin_1_states_provinces</span></td><td>9/27/2025</td><td></td><td></td></tr>
            <tr class="item sel"><td><span class="d-flex align-items-center gap-1"><svg class="i16"><use href="#zip"/></svg>GreatBasinOutline</span></td><td>9/27/2025</td><td></td><td></td></tr>
          </tbody>
        </table>
      </div>
    </div>

    <div class="statusbar d-flex align-items-center">
      <span>3 items</span><span class="picked">1 item selected</span><span>13.3 KB</span>
      <button class="view-btn on ms-auto d-flex align-items-center justify-content-center" aria-label="Details view"><svg width="12" height="12" viewBox="0 0 12 12"><path d="M0 1.500h12M0 4.500h12M0 7.500h12M0 10.500h12" stroke="#444"/></svg></button>
      <button class="view-btn d-flex align-items-center justify-content-center" aria-label="Large icons view"><svg width="13" height="13" viewBox="0 0 13 13"><path d="M1.500 1.500h10v8h-10zM1 12h11" fill="none" stroke="#444"/></svg></button>
    </div>
  </section>

  <form class="wizard position-absolute d-flex flex-column" role="dialog" aria-labelledby="wz">
    <div class="caption-row d-flex align-items-center justify-content-end"><button type="button" aria-label="Close"><svg width="12" height="12"><use href="#x"/></svg></button></div>
    <div class="title-row d-flex align-items-center"><button type="button" aria-label="Back" class="text-secondary"><svg class="i16" viewBox="0 0 16 16"><path class="ln" d="M14 7.500H3M7.500 3L3 7.500 7.500 12" opacity=".8"/></svg></button><svg class="i16 zip-ico"><use href="#zip"/></svg><span>Extract Compressed (Zipped) Folders</span></div>
    <div class="pane flex-grow-1">
      <h1 id="wz">Select a Destination and Extract Files</h1>
      <label for="dest" class="d-block mb-1">Files will be extracted to this folder:</label>
      <div class="path-row d-flex"><input id="dest" class="path-box" type="text" value="C:\Users\!geographer\Downloads\GreatBasinOutline"><button type="button" class="wbtn hot">Browse...</button></div>
      <div class="tick-row d-flex align-items-center"><input type="checkbox" id="show" class="tick" checked><label for="show">Show extracted files when complete</label></div>
    </div>
    <footer class="d-flex align-items-center justify-content-end"><button type="button" class="wbtn def">Extract</button><button type="button" class="wbtn">Cancel</button></footer>
  </form>
</main>

<footer class="taskbar d-flex align-items-center">
  <button class="tb d-flex align-items-center justify-content-center" aria-label="Start"><svg width="24" height="24" viewBox="0 0 24 24"><path d="M0 0h11.500v11.500H0zM12.500 0H24v11.500H12.500zM0 12.500h11.500V24H0zM12.500 12.500H24V24H12.500z" fill="url(#gStart)"/></svg></button>
  <label class="seek d-flex align-items-center">
    <svg class="i16" viewBox="0 0 16 16"><circle class="ln" cx="7" cy="7" r="5.500" stroke-width="1.600"/><path class="ln" d="M11 11l4 4" stroke-width="1.800"/></svg>
    <input type="text" placeholder="Search" aria-label="Search">
    <svg width="48" height="26" viewBox="0 0 48 26"><ellipse cx="25" cy="24" rx="21" ry="2" fill="#a9a5a2"/><rect x="1" y="7" width="13" height="9" rx="1.500" fill="#555" transform="rotate(-8 7 11)"/><circle cx="8" cy="11.500" r="3.600" fill="#1d1d1d" stroke="#999"/><path d="M19 8V3h5v5M30 5V0h5v5" fill="none" stroke="#555" stroke-width="1.200"/><rect x="16" y="8" width="11" height="16" rx="2" fill="#e99a9c"/><path d="M19 9v14M24 9v14" stroke="#cf7c80"/><rect x="27" y="5" width="12" height="19" rx="2" fill="#74c9b0"/><path d="M30.500 6v17M35.500 6v17" stroke="#4ba58c"/><ellipse cx="41" cy="9" rx="6.500" ry="4.500" fill="#dca653" transform="rotate(15 41 9)"/><ellipse cx="40" cy="7.500" rx="3.500" ry="2.200" fill="#f0cc8b"/></svg>
  </label>
  <button class="tb on position-relative d-flex align-items-center justify-content-center" aria-label="File Explorer"><span class="tile d-flex align-items-center justify-content-center"><svg width="26" height="26" viewBox="0 0 26 26"><path d="M1 3q0-1 1-1h7l2 2h12v6H1z" fill="#d89a1c"/><path d="M1 7h9l2-2h12q1 0 1 1v17H1z" fill="#fbc832"/><path d="M5 23v-5q0-2 2-2h12q2 0 2 2v5z" fill="#1a6ab5"/></svg></span><span class="run position-absolute"></span></button>
  <button class="tb d-flex align-items-center justify-content-center" aria-label="Settings"><svg width="26" height="26" viewBox="0 0 26 26"><circle cx="13" cy="13" r="9.500" fill="#6f7780"/><path d="M13 1v24M2.600 7l20.800 12M2.600 19L23.400 7" stroke="#6f7780" stroke-width="5"/><circle cx="13" cy="13" r="6" fill="#e8eef4"/><circle cx="13" cy="13" r="4.500" fill="#1763ae"/></svg></button>
  <button class="tb d-flex align-items-center justify-content-center" aria-label="DaVinci Resolve"><svg width="20" height="20" viewBox="0 0 20 20"><rect width="20" height="20" rx="4" fill="#1c2230" stroke="#50586a"/><circle cx="10" cy="6.500" r="3" fill="#3fb4d8"/><circle cx="6.500" cy="12.500" r="3" fill="#c9d451"/><circle cx="13.500" cy="12.500" r="3" fill="#e5484a"/><circle cx="10" cy="10.500" r="1.200" fill="#fff"/></svg></button>
  <button class="tb d-flex align-items-center justify-content-center" aria-label="Chrome"><svg width="24" height="24"><use href="#chrome"/></svg></button>
  <button class="tb position-relative d-flex align-items-center justify-content-center" aria-label="Chrome profile"><svg width="24" height="24" overflow="visible"><use href="#chrome"/><circle cx="21" cy="3" r="7.500" fill="#e9f1fd"/><g fill="none" stroke="#1f5fc4" stroke-width="1.400"><circle cx="21" cy="3" r="6.300"/><circle cx="21" cy="1.500" r="2"/><path d="M17 7.500q4-4.500 8 0"/></g></svg><span class="run position-absolute"></span></button>
  <button class="tb position-relative d-flex align-items-center justify-content-center" aria-label="Notepad"><svg width="20" height="26" viewBox="0 0 20 26"><rect x="1" y="2" width="18" height="21" rx="1.500" fill="#43bcd6"/><path d="M3 3h14" stroke="#155a7d" stroke-width="4" stroke-dasharray="1.500 1.600"/><path d="M5 9h10M5 13.500h10M5 18h10" stroke="#155a7d" stroke-width="1.600"/><path d="M1 23h18v2H1z" fill="#7d4a1e"/><path d="M1 22h18v1.500H1z" fill="#eee"/></svg><span class="run position-absolute"></span></button>
  <button class="tb position-relative d-flex align-items-center justify-content-center" aria-label="Scribe"><svg width="24" height="24" viewBox="0 0 24 24"><rect width="24" height="24" rx="5" fill="#ef4b66"/><path d="M17.500 7L6 8.800v3L13.500 12.800 17.500 10.500 11.500 9.800 17.500 8.600zM6.500 17L18 15.200v-3L10.500 11.200 6.500 13.500 12.500 14.200 6.500 15.400z" fill="#fff"/></svg><span class="run position-absolute"></span></button>

  <div class="tray ms-auto d-flex align-items-center">
    <button aria-label="Hidden icons" class="me-1"><svg width="12" height="12" viewBox="0 0 12 12"><path class="ln" d="M1.500 8.500L6 4l4.500 4.500" stroke-width="1.300"/></svg></button>
    <svg width="18" height="14" viewBox="0 0 18 14"><path d="M4.500 12.500a3.700 3.700 0 0 1-.3-7.300A5 5 0 0 1 13.500 4.700a3.900 3.900 0 0 1 0 7.800z" fill="#9c9c9c" stroke="#222" stroke-width="1.300"/><path d="M3 1l12 12.500" stroke="#dadada" stroke-width="3"/><path d="M3 1l12 12.500" stroke="#222" stroke-width="1.300"/></svg>
    <div class="pair d-flex align-items-center">
      <svg width="18" height="18" viewBox="0 0 18 18"><path class="ln" d="M11 2H3Q1.500 2 1.500 3.500v8Q1.500 13 3 13h11M8 13v3M4.500 16.500h8M15 7v8.500M13 2h4v4q0 1-1 1h-2q-1 0-1-1z" stroke-width="1.200"/></svg>
      <svg width="18" height="16" viewBox="0 0 18 16"><path class="ln" d="M1.500 6v4H4l3.500 3.500v-11L4 6zM10 5.500q1.800 2.500 0 5M12.300 3.700q3.200 4.300 0 8.600M14.600 2q4.500 6 0 12" stroke-width="1.100"/></svg>
    </div>
    <div class="text-end"><div>2:34 PM</div><div>9/27/2025</div></div>
  </div>
</footer>

<script>
  // The wizard opens with its destination path selected.
  const dest = document.getElementById('dest');
  dest.focus();
  dest.select();
</script>
</body>
</html>
